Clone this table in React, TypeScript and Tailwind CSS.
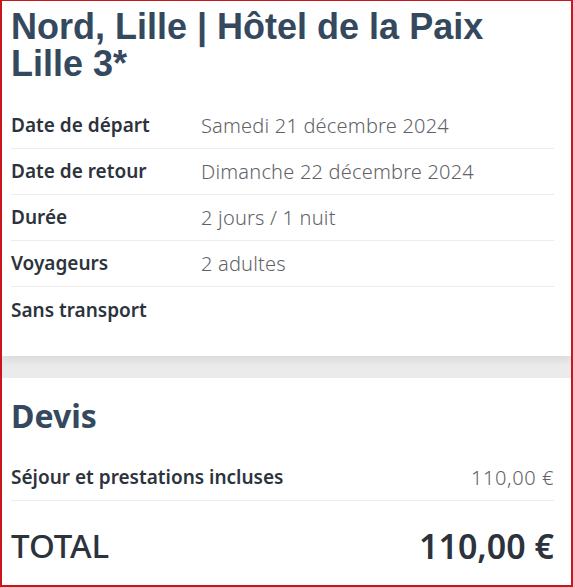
export default function App() {
  const rows = [
    { label: "Date de départ", value: "Samedi 21 décembre 2024" },
    { label: "Date de retour", value: "Dimanche 22 décembre 2024" },
    { label: "Durée", value: "2 jours / 1 nuit" },
    { label: "Voyageurs", value: "2 adultes" },
  ];

  return (
    <div className="w-[573px] h-[587px] overflow-hidden border-2 border-t border-[#c8161d] bg-[#ebebeb] flex flex-col font-['Noto_Sans',sans-serif]">
      {/* Séjour */}
      <div className="bg-white pl-[9px] pr-[17px] pt-[7px] pb-[23px] shadow-[0_4px_8px_rgba(0,0,0,0.08)] relative z-10">
        <h1 className="font-['Liberation_Sans',Arial,sans-serif] font-bold text-[36px] leading-[37px] text-[#34495e]">
          Nord, Lille | Hôtel de la Paix
          <br />
          Lille 3*
        </h1>
        <div className="mt-[21px]">
          {rows.map((r) => (
            <div
              key={r.label}
              className="flex items-center h-[46px] border-b border-[#ececec]"
            >
              <span className="w-[190px] text-[19px] font-semibold text-[#2c333d]">{r.label}</span>
              <span className="text-[20px] tracking-[0.01em] font-light text-[#5f6368]">{r.value}</span>
            </div>
          ))}
          <div className="flex items-center h-[46px] text-[19px]">
            <span className="font-semibold text-[#2c333d]">Sans transport</span>
          </div>
        </div>
      </div>

      {/* Devis */}
      <div className="bg-white mt-[22px] flex-1 pl-[9px] pr-[17px] pt-[20px]">
        <h2 className="font-bold text-[32px] leading-[36px] text-[#34495e]">Devis</h2>
        <div className="mt-[21px] flex items-center justify-between h-[46px] border-b border-[#ececec]">
          <span className="text-[19px] font-semibold text-[#2c333d]">Séjour et prestations incluses</span>
          <span className="text-[20px] tracking-[0.03em] font-light text-[#5f6368]">110,00 €</span>
        </div>
        <div className="flex items-center justify-between h-[90px] text-[#2c333d]">
          <span className="font-medium text-[33px]">TOTAL</span>
          <span className="font-semibold text-[34px]">110,00 €</span>
        </div>
      </div>
    </div>
  );
}
